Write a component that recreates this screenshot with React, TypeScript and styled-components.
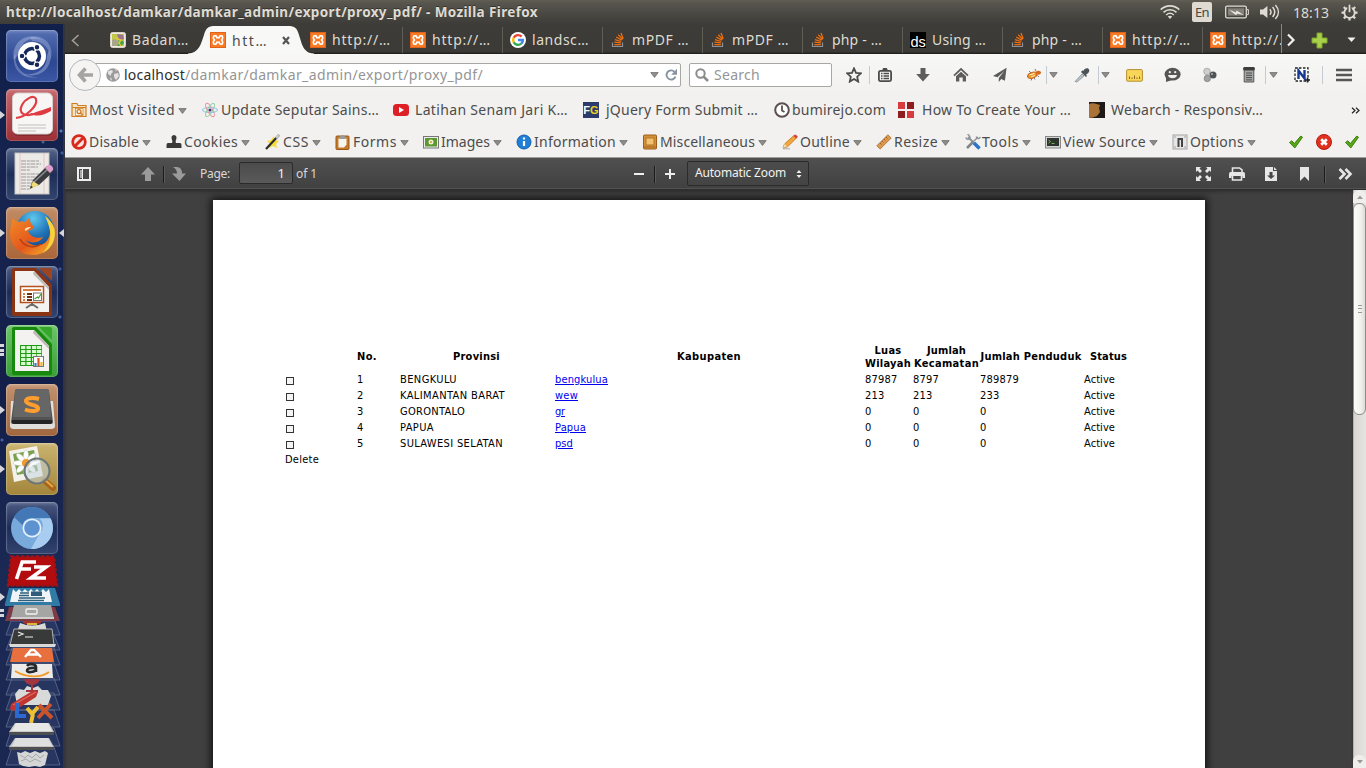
import React, { useLayoutEffect, useRef } from "react";
import styled, { createGlobalStyle } from "styled-components";

const Global = createGlobalStyle`
  * { box-sizing: border-box; }
  html, body { margin: 0; padding: 0; overflow: hidden; background: #404040; }
  svg { display: block; flex: none; }
`;

const Screen = styled.div`
  width: 1366px;
  height: 768px;
  display: flex;
  flex-direction: column;
  overflow: hidden;
  font-family: "Noto Sans", "Open Sans", sans-serif;
  font-size: 14px;
  color: #4c4c4c;
`;

/* ---------- text that fills a known width ---------- */

const FitSpan = styled.span`
  display: block;
  flex: none;
  white-space: nowrap;
`;

function Fit({ w, children }: { w: number; children: string }) {
  const ref = useRef<HTMLSpanElement>(null);
  useLayoutEffect(() => {
    const el = ref.current!;
    el.style.width = "max-content";
    el.style.letterSpacing = "0";
    const natural = el.getBoundingClientRect().width;
    el.style.letterSpacing = `${(w - natural) / children.length}px`;
    el.style.width = `${w}px`;
  }, [w, children]);
  return <FitSpan ref={ref}>{children}</FitSpan>;
}

/* ---------- top panel ---------- */

const TopPanel = styled.header`
  height: 24px;
  flex: none;
  display: flex;
  align-items: center;
  padding-left: 6px;
  background: linear-gradient(#626054 0, #59574f 2px, #4a4943 13px, #3d3c38 24px);
  color: #dfdbd2;
`;
const WindowTitle = styled.div`
  font-weight: 700;
  font-size: 13.5px;
  text-shadow: 0 -1px 0 #33322e;
  flex: 1;
`;
const Indicators = styled.div`
  display: flex;
  align-items: center;
  width: 206px;
  height: 24px;
`;
const Slot = styled.div<{ $w: number }>`
  width: ${(p) => p.$w}px;
  flex: none;
  display: flex;
  align-items: center;
`;
const LangBadge = styled.div`
  width: 20px;
  height: 20px;
  border-radius: 2px;
  background: #dfdbd2;
  color: #4a4943;
  font-size: 13px;
  line-height: 20px;
  display: flex;
  justify-content: center;
`;

const Wifi = () => (
  <svg width="20" height="16" viewBox="0 0 20 16" fill="none" stroke="#dfdbd2" strokeWidth="1.6">
    <path d="M.7 5.6C5.8.6 14.2.6 19.3 5.6" />
    <path d="M3.5 8.4c3.8-3.6 9.2-3.6 13 0" />
    <path d="M6.2 11c2.4-2.2 5.2-2.2 7.6 0" />
    <path d="M7.8 12.6 10 15l2.2-2.4c-1.4-1.1-3-1.1-4.4 0Z" fill="#dfdbd2" stroke="none" />
  </svg>
);
const Battery = () => (
  <svg width="24" height="14" viewBox="0 0 24 14">
    <rect x=".7" y="1.2" width="20.6" height="11.6" rx="1.4" fill="none" stroke="#dfdbd2" strokeWidth="1.3" />
    <rect x="3" y="3.4" width="16" height="7.2" fill="#85827b" />
    <path d="M22 4.6h1.4v5H22" fill="none" stroke="#dfdbd2" />
    <path d="M4 4.8l7 2.6.6-1.8 7 4.4-6.6-1.4-.8 1.6Z" fill="#efebe2" />
  </svg>
);
const Volume = () => (
  <svg width="20" height="16" viewBox="0 0 20 16" fill="none" stroke="#dfdbd2" strokeWidth="1.5">
    <path d="M0 5.4h3L7.4 2v12L3 10.6H0Z" fill="#dfdbd2" stroke="none" />
    <path d="M9.8 5.2c1.4 1.6 1.4 4 0 5.6" />
    <path d="M12.6 3c2.6 3 2.6 7 0 10" />
    <path d="M15.4.9c4 4.4 4 9.8 0 14.2" />
  </svg>
);
const Cog = () => (
  <svg width="17" height="17" viewBox="0 0 17 17" fill="none" stroke="#dfdbd2">
    <circle cx="8.5" cy="8.7" r="5.2" strokeWidth="1.8" />
    <path d="M8.5 13.6v3M3.6 8.7H.5M13.4 8.7h3.1M5 5.2 2.8 3M12 5.2 14.2 3M5 12.2l-2.2 2.2M12 12.2l2.2 2.2" strokeWidth="2.2" />
    <path d="M8.5 0v8" stroke="#4a4943" strokeWidth="4.4" />
    <path d="M8.5.6v7.6" strokeWidth="1.8" />
  </svg>
);

/* ---------- launcher ---------- */

const Body = styled.div`
  flex: 1;
  display: flex;
  min-height: 0;
`;
const Launcher = styled.nav`
  width: 65px;
  flex: none;
  padding: 6px 0 0;
  display: flex;
  flex-direction: column;
  gap: 7px;
  background:
    radial-gradient(circle at 61px 107px, #5379b5 0 1px, transparent 2px),
    radial-gradient(circle at 43px 118px, #416292 0 1px, transparent 2px),
    radial-gradient(circle at 62px 129px, #3d5c94 0 1px, transparent 2px),
    radial-gradient(circle at 60px 245px, #3a558f 0 1px, transparent 2px),
    radial-gradient(circle at 60px 293px, #47649c 0 1px, transparent 2px),
    radial-gradient(circle at 2px 416px, #4a5ba8 0 1px, transparent 2px),
    linear-gradient(90deg, transparent 63px, #33353c 63px),
    linear-gradient(#10204a, #16244f 25%, #131f49 50%, #1b2a55 75%, #1a2750);
`;
const LauncherRow = styled.div`
  display: flex;
  align-items: center;
  height: 52px;
  flex: none;
`;
const Marker = styled.div<{ $kind?: "one" | "many" }>`
  width: 6px;
  height: 14px;
  flex: none;
  clip-path: ${(p) => (p.$kind === "one" ? "polygon(0 3px, 5px 7px, 0 11px)" : "none")};
  background: ${(p) =>
    p.$kind === "one"
      ? "#d6d6da"
      : p.$kind === "many"
        ? "linear-gradient(90deg, transparent 4px, #16244f 4px), linear-gradient(#d6d6da 0 3px, transparent 3px 5px, #d6d6da 5px 8px, transparent 8px 9px, #d6d6da 9px 12px, transparent 12px)"
        : "none"};
`;
const FocusMarker = styled.div`
  width: 5px;
  height: 8px;
  margin-left: 1px;
  background: #d6d6da;
  clip-path: polygon(100% 0, 0 50%, 100% 100%);
`;
const Tile = styled.div<{ $bg: string }>`
  width: 52px;
  height: 52px;
  border-radius: 5px;
  background: ${(p) => p.$bg};
  box-shadow: inset 0 0 0 1px rgba(255, 255, 255, 0.16), inset 0 2px 3px rgba(255, 255, 255, 0.2);
  overflow: hidden;
`;

const Dash = () => (
  <svg width="52" height="52" viewBox="0 0 52 52">
    <path d="M8 30C4 12 22 0 36 10 24 6 14 12 13 24ZM43 20c6 16-8 30-26 24 12 2 24-4 24-18Z" fill="#b9c8ec" opacity=".4" />
    <path d="M24 7c14-4 26 10 20 24 1-12-6-20-18-20ZM10 24c-3 12 8 24 22 23C20 50 6 42 8 26" fill="#b9c8ec" opacity=".35" />
    <circle cx="26" cy="26" r="14" fill="#fff" />
    <circle cx="26" cy="26" r="7.4" fill="none" stroke="#15275c" strokeWidth="3.6" />
    <path d="M26 26 13 26M26 26l6.5-11M26 26l6.5 11" stroke="#fff" strokeWidth="1.5" />
    <circle cx="26" cy="26" r="5.4" fill="#fff" />
    <g fill="#15275c" stroke="#fff" strokeWidth="1.1">
      <circle cx="16" cy="26" r="2.8" />
      <circle cx="31" cy="17.2" r="2.8" />
      <circle cx="31" cy="34.8" r="2.8" />
    </g>
  </svg>
);
const PdfEditor = () => (
  <svg width="52" height="52" viewBox="0 0 52 52">
    <rect x="7" y="5" width="40" height="42" rx="5" fill="#6e1f24" opacity=".6" />
    <rect x="6.500" y="4" width="40" height="41" rx="5" fill="#f7f6f4" stroke="#d4cfcb" />
    <path d="M10 29C20 28 32 17 30 10c-2-5-11 0-14 6-4 8 2 12 12 9 6-2 13-5 17-5" fill="none" stroke="#e04045" strokeWidth="2.200" />
    <path d="M24 24c8 1 15-4 21-6v4c-7 4-15 7-21 2Z" fill="#e0393f" />
    <path d="M12 36h28M12 39h28M12 42h18" stroke="#c2c0bd" />
  </svg>
);
const TextEditor = () => (
  <svg width="52" height="52" viewBox="0 0 52 52">
    <rect x="9" y="5" width="34" height="41" fill="#eceae6" stroke="#c8c6c1" />
    <path d="M14 5v41M38 5v41" stroke="#e9b2b2" strokeWidth=".7" />
    <path d="M15 13h18M15 16h20M15 19h17M15 22h9M15 26h18M15 29h16M15 32h19M15 35h14M15 38h12M15 41h9" stroke="#9a9a9a" strokeWidth="1" strokeDasharray="5 .8 3 .6" />
    <path d="m24 40 3-8 14-14 6 6-14 13Z" fill="#3b3c40" />
    <path d="M28 34 43 20" stroke="#8b8d92" strokeWidth="1.500" />
    <path d="m24 41 3-8 6 4Z" fill="#f0dc74" />
    <path d="m24 41 1-3 2 1Z" fill="#222" />
    <path d="m39 20 3-3c2-1 6 2 5 5l-3 3Z" fill="#e0a0cc" />
  </svg>
);
const FirefoxArt = () => (
  <svg width="52" height="52" viewBox="0 0 52 52">
    <defs>
      <radialGradient id="ffb" cx=".45" cy=".2" r=".9">
        <stop offset="0" stopColor="#5fc8ee" />
        <stop offset=".5" stopColor="#2075b8" />
        <stop offset="1" stopColor="#123a7c" />
      </radialGradient>
      <linearGradient id="ffo" x1="0" y1="0" x2="1" y2="1">
        <stop offset="0" stopColor="#f08c28" />
        <stop offset=".55" stopColor="#e4571c" />
        <stop offset="1" stopColor="#f9b82c" />
      </linearGradient>
    </defs>
    <circle cx="29" cy="23" r="19" fill="url(#ffb)" />
    <path d="M6 12c2 0 4 2 5 3 3-1 6-1 8 0l5-5c0 4 0 7 4 9 0 3-3 4-6 5 2 6 9 8 15 6-3 6-12 7-17 3 6 8 18 7 22-1 4-8 2-13-1-19 6 4 8 9 7 16C46 42 37 48 27 48 13 48 3 37 4 25c0-5 2-8 2-13Z" fill="url(#ffo)" />
    <path d="M39 9c8 6 12 14 9 24-2 6-6 10-11 13 6-8 8-14 7-22-1-6-3-10-5-15Z" fill="#f7d23b" />
    <path d="M19 24c-1-3 2-4 6-4-2 2-4 3-6 4Z" fill="#fbe3b0" />
    <path d="M14 32c4 8 14 10 21 5" fill="none" stroke="#b83c12" strokeWidth="1.500" />
  </svg>
);
const Office = ({ c, d, children }: { c: string; d: string; children: React.ReactNode }) => (
  <svg width="52" height="52" viewBox="0 0 52 52">
    <path d="M8 2h22l16 17v29q0 2-2 2H8q-2 0-2-2V4q0-2 2-2Z" fill={c} />
    <path d="M33 2h11q2 0 2 2v11Z" fill={d} />
    <path d="M9 5h19l15 16v25H9Z" fill="#f3f2f1" />
    <path d="M28 5 43 21v3L27 8Z" fill="#bdbab8" />
    {children}
  </svg>
);
const Impress = () => (
  <Office c="#8a3413" d="#9c4520">
    <rect x="14.500" y="20.500" width="23" height="16" fill="#fff" stroke="#b5511f" strokeWidth="1.500" />
    <path d="M17 24h18" stroke="#d77d40" strokeWidth="2" />
    <path d="M17 28h2M17 31h2M17 34h2" stroke="#d77d40" strokeWidth="2" />
    <path d="M21 28h5M21 31h5M21 34h5" stroke="#6c3015" strokeWidth="2" />
    <rect x="27.500" y="27" width="8" height="7.500" fill="#fff" stroke="#777" />
    <path d="m28.500 33 3-2 1 1 2.500-4" stroke="#4da33a" strokeWidth="1.300" fill="none" />
    <path d="M26 37v2m0-1-6 4m6-4 6 4" stroke="#6b6b6b" strokeWidth="2" />
  </Office>
);
const Calc = () => (
  <Office c="#178a0d" d="#35a82c">
    <rect x="14" y="20" width="22" height="21" fill="#1f9c14" />
    <g fill="#d8fbd2">
      {[21, 25, 29, 33, 37].map((y) => [15, 20.5, 26, 31].map((x) => <rect key={`${x}-${y}`} x={x} y={y} width="4.300" height="3" />))}
    </g>
    <rect x="27.500" y="31.500" width="10" height="10" fill="#fff" stroke="#777" />
    <path d="M29.500 41v-3" stroke="#3a7ac8" strokeWidth="2.200" />
    <path d="M32.500 41v-8" stroke="#d9541e" strokeWidth="2.200" />
    <path d="M35.500 41v-4" stroke="#f0b820" strokeWidth="2.200" />
  </Office>
);
const Sublime = () => (
  <svg width="52" height="52" viewBox="0 0 52 52">
    <path d="M5 17h42l2 25q0 3-4 3H8q-4 0-4-3Z" fill="#e0dedb" />
    <path d="M9 7q0-2 3-2h28q3 0 3 2l4 31q0 2-3 2H8q-3 0-3-2Z" fill="#525252" />
    <path d="M9 7q0-2 3-2h28q3 0 3 2l2 26H7Z" fill="#666" />
    <path d="M6 36h40v2q0 2-3 2H9q-3 0-3-2Z" fill="#242424" />
    <path d="M33 15c-6-2-14-1-13 2.500 1 3.500 11 3 12 6.500s-7 4-13 1.500" fill="none" stroke="#ff9d2e" strokeWidth="4" />
  </svg>
);
const ImageViewer = () => (
  <svg width="52" height="52" viewBox="0 0 52 52">
    <path d="M3 8 31 3l6 30-29 6Z" fill="#f2f1ec" />
    <path d="M7 11 28 7l4 21-21 4Z" fill="#79a04d" />
    <g fill="#fff" stroke="#b8c4b0" strokeWidth=".5">
      {[0, 45, 90, 135, 180, 225, 270, 315].map((a) => (
        <ellipse key={a} cx="20" cy="13" rx="2.600" ry="6" transform={`rotate(${a} 20 20)`} />
      ))}
    </g>
    <circle cx="20" cy="20" r="4" fill="#f19a2a" />
    <path d="m39 38 8 7" stroke="#a8651a" strokeWidth="6" strokeLinecap="round" />
    <path d="m39 37 8 7" stroke="#e8a848" strokeWidth="2" />
    <circle cx="31" cy="28" r="12.500" fill="#c7d6de" fillOpacity=".55" stroke="#6d7678" strokeWidth="2.200" />
    <path d="M22 25c2-6 9-8 13-6-4 1-9 3-13 6Z" fill="#fff" opacity=".8" />
  </svg>
);
const Chromium = () => (
  <svg width="52" height="52" viewBox="0 0 52 52">
    <circle cx="26" cy="26" r="21" fill="#78aadb" />
    <path d="M26 5a21 21 0 0 1 18.300 11H26a10 10 0 0 0-9.500 7L8 15A21 21 0 0 1 26 5Z" fill="#4377b5" />
    <path d="M44.600 16.500A21 21 0 0 1 25 47l9-16a10 10 0 0 0-.5-14.500Z" fill="#a9cdf0" />
    <circle cx="26" cy="26" r="9.500" fill="#e6f1fb" />
    <circle cx="26" cy="26" r="7.800" fill="#5d92d0" />
  </svg>
);
const FoldedStack = () => (
  <svg width="65" height="213" viewBox="0 0 65 213">
    <g fill="#33446f" fillOpacity=".5" stroke="#6b7697" strokeWidth=".7">
      <path d="M11 66h44l5 14H6ZM12 80h42l6 15H6ZM12 93h42l6 17H6ZM12 108h42l6 17H6ZM12 123h42l6 17H6ZM12 138h42l6 17H6ZM12 155h42l6 17H6ZM12 173h42l6 18H6ZM12 192h42l6 18H6Z" />
    </g>
    <path d="M12 2h42l3 26 1 3H7Z" fill="#8d0f10" />
    <path d="M11 1.500h43l3 29H8Z" fill="#b30c0f" stroke="#a01215" strokeWidth="2.400" strokeDasharray="3 2" />
    <path d="m22.500 6-6 18M21 7h15M19 14h12M34 12h12L31 23h15" fill="none" stroke="#fff" strokeWidth="3.600" />
    <path d="M9 33h46l5 16v2H5v-2Z" fill="#2f7ba5" />
    <path d="m13 34 3 3 3-3 3 3 3-3 3 3 3-3 3 3 3-3 3 3 3-3 3 3 3-3 3 13H10Z" fill="#f0f4f6" />
    <path d="M20 38h9M19 40.500h10M19 43h26M18 45.500h26" stroke="#2f5f7c" strokeWidth="1.300" />
    <rect x="31" y="36.500" width="11" height="4.500" fill="#315b7a" />
    <path d="M9 52h46l5 14H5Z" fill="#7d3b48" />
    <path d="M14 50h37l3 13H11Z" fill="#a5a5a4" />
    <rect x="26" y="54" width="11" height="5" rx="1" fill="none" stroke="#f2f2f2" strokeWidth="1.300" />
    <path d="M11 62h43v2H10Z" fill="#cfcecd" />
    <path d="M23 66h18v2q-9 4-18 0Z" fill="#a6362a" />
    <path d="M27 68h10v2H27Z" fill="#e0b43a" />
    <path d="M20 68q12 5 25 0l2 9H17Z" fill="#dbdbd5" />
    <path d="M14 74h38l2 16H10Z" fill="#383a3a" stroke="#cfcfcd" strokeWidth=".8" />
    <path d="m9 89 1 3h45l1-3Z" fill="#d9d9d7" />
    <path d="m18 77 5 2-5 2M25 82h8" stroke="#e9e9e9" strokeWidth="1.200" fill="none" />
    <path d="M13 93h39l2 14H10Z" fill="#e8703f" />
    <path d="m25 102 6-7h3l7 7M27 99.500h11" stroke="#fff" strokeWidth="2.400" fill="none" />
    <path d="M12 109h40l1 14H11Z" fill="#ecebe9" />
    <path d="M27 111c2-3 9-2 9 1v5M36 113c-11-1-11 5-5 4 3 0 4-1 5-2" fill="none" stroke="#25292d" strokeWidth="2.600" />
    <path d="M15 116c11 7 26 7 34 1" fill="none" stroke="#f29a24" strokeWidth="1.800" />
    <path d="m15 139 4-5 5 1 3-4 6 2 5-2 4 4 6 0 3 6-3 9H17Z" fill="#d8d9d9" />
    <path d="M24 124h16q-1 5-7 6v5h5v2H26v-2h5v-5q-6-1-7-6Z" fill="#a23540" />
    <path d="m10 154 1-5 23-14 4 2-2 5-22 14Z" fill="#c03531" />
    <path d="m13 150 23-13" stroke="#de6a5f" strokeWidth="1.200" />
    <path d="M17 148v13h9" fill="none" stroke="#2c69d0" strokeWidth="4" />
    <path d="m27 153 5 6 6-7M33 159l-2 9" fill="none" stroke="#eec132" strokeWidth="4" />
    <path d="m39 150 13 13M51 149l-13 14" stroke="#c9542c" strokeWidth="4" />
    <path d="M15 168h34l5 9v3H9v-3Z" fill="#c9c9c8" />
    <path d="M16 168h32l4 8H12Z" fill="#e7e7e6" />
    <path d="M9 177h45v3H9Z" fill="#4d4e50" />
    <path d="M15 183h34l5 9v3H9v-3Z" fill="#c3c3c3" />
    <path d="M16 183h32l4 8H12Z" fill="#dfdfdf" />
    <path d="M9 192h45v3H9Z" fill="#4d4e50" />
    <path d="m17 197 4 1 4-2 5 2 5-2 5 2 5-2 3 2-3 12-5 2-5-1-6 1-6-1-4-2Z" fill="#d4d6d6" />
    <path d="m20 200 5 3 3-3 4 3 4-4 4 4 4-3M21 206l5-2 4 3 5-3 6 3" fill="none" stroke="#a5a9ac" />
    <path d="m0 38 5 4-5 4ZM0 54h4v3H0ZM0 59h4v3H0Z" fill="#d6d6da" />
  </svg>
);
const StackWrap = styled.div`
  height: 213px;
  flex: none;
  margin-top: -6px;
`;

/* ---------- browser chrome ---------- */

const Browser = styled.main`
  flex: 1;
  min-width: 0;
  display: flex;
  flex-direction: column;
`;
const TabStrip = styled.div`
  height: 30px;
  flex: none;
  display: flex;
  background: linear-gradient(#3d3c38, #3b3a36 28px, #23221f 29px, #23221f);
  color: #dfdbd2;
`;
const ScrollLeft = styled.div`
  width: 37px;
  padding: 10px 0 0 6px;
`;
const Tab = styled.div<{ $line?: boolean; $w?: number }>`
  width: ${(p) => p.$w ?? 100}px;
  height: 29px;
  flex: none;
  display: flex;
  align-items: center;
  padding: 3px 0 0 8px;
  gap: 6px;
  overflow: hidden;
  background: ${(p) =>
    p.$line ? "linear-gradient(90deg, #282723 0 1px, #5f5d54 1px 2px, transparent 2px) -1px 3px no-repeat" : "none"};
  ${FitSpan} { padding-bottom: 1px; }
`;
const ActiveTab = styled.div`
  position: relative;
  width: 100px;
  height: 30px;
  flex: none;
  display: flex;
  align-items: center;
  padding: 2px 0 0 8px;
  gap: 6px;
  color: #4c4c4c;
`;
const TabShape = styled.svg`
  position: absolute;
  left: -14px;
  top: 1px;
`;
const Above = styled.div`
  position: relative;
  display: flex;
  align-items: center;
`;
const TabEnd = styled.div`
  display: flex;
  align-items: center;
  padding-top: 3px;
  height: 29px;
  border-left: 1px solid #8a8880;
`;

const Xampp = () => (
  <svg width="16" height="16" viewBox="0 0 16 16">
    <rect width="16" height="16" rx="1" fill="#fb7a24" />
    <rect x=".5" y=".5" width="15" height="15" fill="none" stroke="#e0621b" />
    <path
      d="M6.700 5.800V4.900Q6.700 3.900 5.700 3.900H4.500Q3.400 3.900 3.400 5V6.500L4.500 8 3.400 9.500V11Q3.400 12.100 4.500 12.100H5.700Q6.700 12.100 6.700 11.100V10.200H9.300V11.100Q9.300 12.100 10.300 12.100H11.500Q12.600 12.100 12.600 11V9.500L11.500 8 12.600 6.500V5Q12.600 3.900 11.500 3.900H10.300Q9.300 3.900 9.300 4.900V5.800Z"
      fill="none"
      stroke="#fff"
      strokeWidth="1.600"
    />
    <path d="M6.500 8h3" stroke="#fb7a24" strokeWidth="1.500" />
  </svg>
);
const MapIcon = () => (
  <svg width="16" height="16" viewBox="0 0 16 16">
    <rect x=".5" y=".5" width="15" height="15" rx="2" fill="#efe9e0" stroke="#d9d3ca" />
    <path d="M2 2h12v12H2Z" fill="#b8c94c" />
    <path d="m7 2 6 1 1 4-4 1-2-3Z" fill="#a0708f" />
    <path d="m2 8 4-1 3 4-3 3H2Z" fill="#a9a58a" />
    <path d="m8 8 5 1 1 2-3 3H7l2-3Z" fill="#3fa34f" />
    <path d="m3 4 4 3 4 1-2 3 2 3" stroke="#e5c33e" strokeWidth="1.400" fill="none" />
  </svg>
);
const GoogleG = () => (
  <svg width="16" height="16" viewBox="0 0 16 16">
    <circle cx="8" cy="8" r="8" fill="#fff" />
    <g fill="none" strokeWidth="2.400">
      <path d="M11.600 4.600A4.900 4.900 0 0 0 3.700 5.800" stroke="#ea4335" />
      <path d="M3.700 5.800a4.900 4.900 0 0 0 0 4.400" stroke="#fbbc05" />
      <path d="M3.700 10.200a4.900 4.900 0 0 0 7.500 1.500" stroke="#34a853" />
      <path d="M11.200 11.700A4.900 4.900 0 0 0 12.900 8H8" stroke="#4285f4" />
    </g>
  </svg>
);
const Stack = () => (
  <svg width="16" height="16" viewBox="0 0 16 16" fill="none">
    <path d="M2.500 10.500v4h10v-4" stroke="#8b9299" strokeWidth="1.200" />
    <path d="M4.300 12.600h6.500M4.400 10.200l6.500.7M5 7.600l6.200 1.900M6.200 5l5.700 3.100M8.300 2.800l4.400 4.600M11 1l2.200 5.800" stroke="#f0700c" strokeWidth="1.300" />
  </svg>
);
const DsBox = styled.div`
  width: 16px;
  height: 16px;
  flex: none;
  background: #000;
  color: #fff;
  font: 14.5px/16px "Liberation Sans", sans-serif;
  padding-top: 2px;
  display: flex;
  justify-content: center;
`;
const Plus = () => (
  <svg width="17" height="17" viewBox="0 0 17 17">
    <path d="M6 1h5v5h5v5h-5v5H6v-5H1V6h5Z" fill="#a8d048" stroke="#7ea52a" />
  </svg>
);

const NavBar = styled.div`
  height: 41px;
  flex: none;
  display: flex;
  align-items: center;
  padding-left: 4px;
  background: linear-gradient(#f7f7f6, #f2f1f0);
`;
const BackButton = styled.div`
  position: relative;
  width: 32px;
  height: 32px;
  flex: none;
  border: 1px solid #b3b8be;
  border-radius: 50%;
  background: #f5f4f3;
  display: flex;
  align-items: center;
  justify-content: center;
`;
const UrlBox = styled.div`
  width: 597px;
  height: 24px;
  flex: none;
  margin-left: -17px;
  padding-left: 21px;
  display: flex;
  align-items: center;
  background: #fff;
  border: 1px solid #a9a7a2;
  border-radius: 2px;
  color: #959595;
`;
const Host = styled.span`
  color: #2d2d2d;
`;
const SearchBox = styled.div`
  width: 143px;
  height: 24px;
  flex: none;
  margin-left: 8px;
  padding-left: 5px;
  display: flex;
  align-items: center;
  gap: 5px;
  background: #fff;
  border: 1px solid #a9a7a2;
  border-radius: 2px;
  color: #959595;
`;
const Caret = ({ c = "#6d6b68" }: { c?: string }) => (
  <svg width="9" height="6" viewBox="0 0 9 6">
    <path d="M.8.6h7.400L4.500 5.400Z" fill={c} fillOpacity=".75" stroke={c} strokeWidth=".8" />
  </svg>
);
const VLine = styled.div`
  width: 1px;
  height: 18px;
  flex: none;
  background: #c3cad2;
`;

const ToolRow = styled.div<{ $h: number; $top: number }>`
  height: ${(p) => p.$h}px;
  padding-top: ${(p) => p.$top}px;
  flex: none;
  display: flex;
  align-items: flex-start;
  padding-left: 6px;
  background: #f2f1f0;
  ${FitSpan} { padding-bottom: 2px; }
`;
const Item = styled.div<{ $w: number; $gap: number }>`
  width: ${(p) => p.$w}px;
  height: 20px;
  flex: none;
  display: flex;
  align-items: center;
  gap: ${(p) => p.$gap}px;
`;
const ArrowBox = styled.div<{ $gap: number }>`
  margin-left: ${(p) => 3 - p.$gap}px;
  padding-top: 1px;
`;

const G = ({ children, w = 16 }: { children: React.ReactNode; w?: number }) => (
  <svg width={w} height="16" viewBox={`0 0 ${w} 16`}>
    {children}
  </svg>
);
const FgBox = styled.div`
  width: 16px;
  height: 16px;
  flex: none;
  background: #2c3b6e;
  color: #fff;
  font: 700 11px/16px "Liberation Sans", sans-serif;
  display: flex;
  justify-content: center;
  b { color: #e8d21d; }
`;

const navIcons: Record<string, React.ReactNode> = {
  star: <G><path d="m8 1.400 2 4.500 4.800.5-3.600 3.300 1 4.900L8 12.100l-4.200 2.500 1-4.900L1.200 6.400 6 5.900Z" fill="none" stroke="#4c4c4c" strokeWidth="1.800" /></G>,
  list: (
    <G>
      <rect x="1.900" y="3.900" width="12.200" height="10.200" rx="1.500" fill="none" stroke="#4c4c4c" strokeWidth="1.800" />
      <path d="M5 3.500 6.200 1h3.600L11 3.500Z" fill="#4c4c4c" />
      <path d="M4 6.500h1.500M6.500 6.500H12M4 9h1.500M6.500 9H12M4 11.500h1.500M6.500 11.500H12" stroke="#4c4c4c" strokeWidth="1.300" />
    </G>
  ),
  down: <G><path d="M5.500 1h5v6h4.300L8 14.500 1.200 7h4.300Z" fill="#5d5d5d" /></G>,
  home: <G><path d="M8 .8 15.600 8l-1.200 1.200L8 3.300 1.600 9.200.4 8Z" fill="#5d5d5d" /><path d="M3 9.200 8 4.700l5 4.500v5.300H9.700v-4H6.300v4H3Z" fill="#5d5d5d" /></G>,
  plane: <G><path d="M14.600.8 1 9l4.500 1.200 7-6.500-5.700 7.200V15l2.400-3 3.700 1.800Z" fill="#5a5a5a" /></G>,
  bug: (
    <G>
      <path d="m3 4 2 2M1.500 9.500h2M9 2l1 2M13 10l-1.500-1.500M5 13.500l1-2M15 5.500l-2-.5M9 12.500l-1-2" stroke="#555" strokeWidth=".8" />
      <ellipse cx="6.300" cy="8.300" rx="5" ry="2.900" transform="rotate(-18 6.300 8.300)" fill="#e99323" stroke="#b9480f" strokeWidth=".7" />
      <ellipse cx="12.300" cy="5.800" rx="2.600" ry="2" fill="#d9641a" />
      <path d="m3.500 8 5-1.700M5 10l4-1.500" stroke="#fde9a8" strokeWidth="1.300" />
    </G>
  ),
  dropper: (
    <G>
      <path d="M1 14.500 8 7l2 2-7 6Z" fill="#b9c3cb" stroke="#7d878e" strokeWidth=".7" />
      <path d="m7 5 5 5 1-1-1-1.200C14 6.500 16 4.500 15 2.500s-4-1.500-5.500 1.200L8.200 3.500Z" fill="#4c5359" />
    </G>
  ),
  ruler: (
    <G w={17}>
      <rect x=".6" y="2.600" width="15.800" height="11.600" rx="1" fill="#f8d65a" stroke="#b68e2e" />
      <path d="M3.500 9.500V12M6 10.500V12M8.500 8.500V12M11 10.500V12M13.500 9.500V12" stroke="#8a661d" />
    </G>
  ),
  smile: (
    <G w={17}>
      <ellipse cx="8.600" cy="7.200" rx="8" ry="6.400" fill="#565656" />
      <path d="m2 10 0 5 6-2Z" fill="#565656" />
      <circle cx="5.800" cy="5.200" r="1.100" fill="#f2f1f0" />
      <circle cx="11.200" cy="5.200" r="1.100" fill="#f2f1f0" />
      <path d="M4 8h9c-.5 4.300-8.500 4.300-9 0Z" fill="#f2f1f0" />
    </G>
  ),
  balls: (
    <G>
      <circle cx="5" cy="4.500" r="3.300" fill="#cfcfcf" stroke="#9a9a9a" strokeWidth=".7" />
      <circle cx="11" cy="8" r="3.500" fill="#4e5355" />
      <circle cx="5.300" cy="11.500" r="3.200" fill="#a0a2a3" stroke="#7b7b7b" strokeWidth=".7" />
      <circle cx="10" cy="7" r="1.100" fill="#aaa" />
    </G>
  ),
  calc: (
    <G>
      <path d="M2.500 1h11l-.7 3V15h-9.600V4Z" fill="#a5a7a6" stroke="#565656" />
      <rect x="2.500" y="0" width="11" height="3.500" rx="1" fill="#3d3d3d" />
      <path d="M5 6h6M5 8.300h6M5 10.600h6M5 12.900h6" stroke="#4c4c4c" strokeWidth="1" />
    </G>
  ),
  nimbus: (
    <G>
      <path d="M1 1h13v13H1Z" fill="#fff" stroke="#222" strokeWidth="1.300" strokeDasharray="2.500 1.500" />
      <path d="M4.500 12V3.500l6 8V3" fill="none" stroke="#17398f" strokeWidth="2.400" />
      <path d="M13.500 10.500v5M11 13h5" stroke="#222" strokeWidth="1.600" />
    </G>
  ),
};

const bookmarks: { icon: React.ReactNode; w: number; gap: number; text: string; tw: number; arrow?: boolean }[] = [
  {
    icon: (
      <G>
        <path d="M1 1.500h5l1 2h8v11H1Z" fill="#f6e3c4" stroke="#d07d20" strokeWidth="1.200" />
        <path d="M1 5.500h14" stroke="#d07d20" />
        <rect x="4.500" y="6.500" width="7.500" height="7" fill="#fbf3e4" stroke="#d58a38" strokeWidth=".8" />
        <circle cx="8" cy="9.600" r="2" fill="none" stroke="#cc7418" strokeWidth="1.200" />
        <path d="m9.500 11 2 2" stroke="#cc7418" strokeWidth="1.200" />
      </G>
    ),
    w: 131, gap: 2, text: "Most Visited", tw: 86, arrow: true,
  },
  {
    icon: (
      <G>
        <g fill="none" strokeWidth=".9">
          <ellipse cx="8" cy="8" rx="7.500" ry="2.600" stroke="#7fbfe6" />
          <ellipse cx="8" cy="8" rx="7.500" ry="2.600" transform="rotate(60 8 8)" stroke="#e98f9c" />
          <ellipse cx="8" cy="8" rx="7.500" ry="2.600" transform="rotate(120 8 8)" stroke="#86cf9a" />
        </g>
        <circle cx="8" cy="8" r="1.600" fill="#46307c" />
      </G>
    ),
    w: 191, gap: 3, text: "Update Seputar Sains…", tw: 158,
  },
  {
    icon: <G><rect y="2" width="16" height="12" rx="3.500" fill="#dd1f26" /><path d="m6 5 5 3-5 3Z" fill="#fff" /></G>,
    w: 190, gap: 6, text: "Latihan Senam Jari K…", tw: 153,
  },
  { icon: <FgBox>F<b>G</b></FgBox>, w: 191, gap: 7, text: "jQuery Form Submit …", tw: 152 },
  {
    icon: <G><circle cx="8" cy="8" r="6.800" fill="#fff" stroke="#5b4f52" strokeWidth="2" /><path d="M8 3.500v5l2.500 1.500" fill="none" stroke="#5b4f52" strokeWidth="1.800" /></G>,
    w: 124, gap: 2, text: "bumirejo.com", tw: 94,
  },
  {
    icon: (
      <G>
        <path d="M0 0h7v7H0ZM9 9h7v7H9Z" fill="#d93a40" />
        <path d="M9 0h7v7H9ZM0 9h7v7H0Z" fill="#8f1d20" />
      </G>
    ),
    w: 191, gap: 8, text: "How To Create Your …", tw: 149,
  },
  {
    icon: <G><rect width="16" height="16" fill="#1f1a18" /><path d="M0 2c4-2 8 0 11 1l-1 3 1 4-3 4c-3 1-5 2-8 2Z" fill="#a97338" /></G>,
    w: 262, gap: 6, text: "Webarch - Responsiv…", tw: 152,
  },
];

const tools: { icon: React.ReactNode; w: number; text: string; tw: number; gap: number }[] = [
  { icon: <G><circle cx="8" cy="8" r="7.700" fill="#d8291c" /><circle cx="8" cy="8" r="4.900" fill="#f6e5e2" /><path d="M3.800 12.200 12.200 3.800" stroke="#d8291c" strokeWidth="3" /></G>, w: 95, text: "Disable", tw: 50, gap: 2 },
  { icon: <G><path d="M5.500 3.500C5.500 0 10.500 0 10.500 3.500c0 2.500-1.500 3-.5 5.500h4q1.500 0 1.500 2v3H.5v-3q0-2 1.500-2h4c1-2.500-.5-3-.5-5.500Z" fill="#3a3a3a" /></G>, w: 99, text: "Cookies", tw: 54, gap: 2 },
  {
    icon: (
      <G>
        <path d="m9 2 1 4 4 1-3 3 1 4-4-2-4 2 1-4-3-3 4-1Z" fill="#f7dd3c" />
        <path d="m1 15 13-14" stroke="#2b2b2b" strokeWidth="2.200" />
        <path d="m11 4 3-3" stroke="#d0d0d0" strokeWidth="2.200" />
      </G>
    ), w: 70, text: "CSS", tw: 26, gap: 2,
  },
  {
    icon: (
      <G>
        <rect x="1" y="2" width="13" height="13.500" rx="1" fill="#c67a2b" stroke="#9a5614" />
        <path d="M3.500 4.500h8v6l-2.500 3H3.500Z" fill="#f7f5f0" />
        <path d="M4.500 5V2.500L6 2q1-2 3 0l1.500.5V5Z" fill="#9a9a9a" />
      </G>
    ), w: 88, text: "Forms", tw: 44, gap: 2,
  },
  {
    icon: (
      <G>
        <rect x=".5" y="2.500" width="15" height="11.500" fill="#ededed" stroke="#777" />
        <rect x="2" y="4" width="12" height="8.500" fill="#5c982e" />
        <circle cx="8" cy="8" r="2.500" fill="#f3efda" />
        <circle cx="8" cy="8" r="1" fill="#caa21d" />
      </G>
    ), w: 93, text: "Images", tw: 49, gap: 2,
  },
  { icon: <G><circle cx="8" cy="8" r="7" fill="#1f7fd6" stroke="#155fae" /><path d="M8 7v5M8 3.500v2" stroke="#fff" strokeWidth="2.200" /></G>, w: 126, text: "Information", tw: 82, gap: 2 },
  {
    icon: (
      <G>
        <rect x="1.500" y="1" width="13" height="14" rx="1" fill="#d58f38" stroke="#9c601b" />
        <rect x="4" y="4" width="8" height="7" fill="#f2c273" stroke="#b37526" />
        <path d="M2 13h12" stroke="#a3661e" />
      </G>
    ), w: 140, text: "Miscellaneous", tw: 95, gap: 2,
  },
  {
    icon: (
      <G>
        <path d="M1 14.800h7" stroke="#aaa" />
        <path d="m1 14 1.500-4 10-9 2.500 2.500-9.500 9.300Z" fill="#f3a63a" stroke="#bb6d16" strokeWidth=".8" />
        <path d="m11.500 2 2-1.600 2.300 2.200-1.800 2Z" fill="#d83c46" />
        <path d="m1 14 1.500-4 2.500 2.500Z" fill="#f0dcb8" />
      </G>
    ), w: 94, text: "Outline", tw: 50, gap: 2,
  },
  { icon: <G><path d="m.8 11.800 11-11L15.200 4l-11 11Z" fill="#dc9a50" stroke="#a9682a" strokeWidth=".8" /><path d="m4 9 1.500 1.500M6 7l1.500 1.500M8 5l1.500 1.500M10 3l1.500 1.500" stroke="#8b5320" strokeWidth=".8" /></G>, w: 89, text: "Resize", tw: 44, gap: 2 },
  {
    icon: (
      <G>
        <path d="m3 3 10 10" stroke="#8d9296" strokeWidth="2" />
        <path d="M13 3 8 8" stroke="#8d9296" strokeWidth="1.500" />
        <path d="m8 8-6 6" stroke="#7f8488" strokeWidth="2.500" />
        <path d="m9 9 5.500 5.500" stroke="#2c74c9" strokeWidth="3.500" />
        <path d="M.8 3.500C1.500 6 5 5.500 5 3.500S3 .3 2.500 1M15.300 3c-1 2.500-4 2-4-.5" fill="none" stroke="#8d9296" strokeWidth="1.400" />
      </G>
    ), w: 80, text: "Tools", tw: 37, gap: 1,
  },
  {
    icon: (
      <G>
        <rect x=".5" y="2.500" width="15" height="11.500" fill="#d5d5d5" stroke="#888" />
        <rect x="2" y="4" width="12" height="8" fill="#2d352e" />
        <path d="m3.500 6 2 1.500-2 1.500M6.500 9.500h3" fill="none" stroke="#7fbf5a" strokeWidth=".9" />
      </G>
    ), w: 127, text: "View Source", tw: 83, gap: 2,
  },
  {
    icon: (
      <G>
        <rect x="1" y="1" width="14" height="14" fill="#e6e6e6" stroke="#a4a4a4" />
        <path d="M5.500 13V4h5.500v9H9V6H7.500v7Z" fill="#444" />
        <path d="M2.500 3h1M12.500 3h1M2.500 13h1M12.500 13h1" stroke="#666" />
      </G>
    ), w: 116, text: "Options", tw: 54, gap: 2,
  },
];

const Check = () => (
  <svg width="16" height="16" viewBox="0 0 16 16">
    <path d="m1.500 8.500 2.300-1.800L6.300 9.500 12.800 2l1.700 1.200L6.800 14Z" fill="#56a712" stroke="#357a08" strokeWidth=".9" />
  </svg>
);
const ErrorDot = () => (
  <svg width="16" height="16" viewBox="0 0 16 16">
    <circle cx="8" cy="8" r="7.500" fill="#e0301e" stroke="#b81c10" />
    <path d="m5.200 5.200 5.600 5.600M10.800 5.200l-5.600 5.600" stroke="#fff" strokeWidth="2.700" />
  </svg>
);

/* ---------- PDF viewer ---------- */

const PdfBar = styled.div`
  height: 33px;
  flex: none;
  display: flex;
  align-items: center;
  padding-left: 12px;
  border-top: 1px solid #a09f9d;
  box-shadow: inset 0 -1px 0 #2e2e2e, inset 0 -2px 0 #525252;
  background: linear-gradient(#505050, #404040);
  color: #d9d9d9;
  font-size: 12px;
  ${FitSpan} { padding-bottom: 2px; }
`;
const PdfSep = styled.div`
  width: 2px;
  height: 17px;
  flex: none;
  background: linear-gradient(90deg, #1c1c1c 0 1px, #5a5a5a 1px);
`;
const PageInput = styled.div`
  width: 54px;
  height: 22px;
  margin: 0 3px 2px 0;
  padding-right: 7px;
  flex: none;
  display: flex;
  align-items: center;
  justify-content: flex-end;
  border: 1px solid #2b2b2b;
  border-radius: 2px;
  background: linear-gradient(#4b4b4b, #5a5a5a);
  color: #f2f2f2;
  font-size: 13px;
`;
const ZoomSelect = styled.div`
  width: 122px;
  height: 25px;
  margin: 0 0 1px -1px;
  padding-left: 7px;
  flex: none;
  display: flex;
  align-items: center;
  border: 1px solid #2b2b2b;
  border-radius: 2px;
  background: linear-gradient(#4c4c4c, #444);
  color: #f2f2f2;
`;
const Viewer = styled.div`
  flex: 1;
  display: flex;
  min-height: 0;
  background: #404040;
`;
const PageArea = styled.div`
  flex: 1;
  padding: 10px 0 0 148px;
  overflow: hidden;
  box-shadow: inset 0 2px 3px rgba(0, 0, 0, 0.25);
`;
const Paper = styled.section`
  width: 992px;
  height: 700px;
  background: #fff;
  box-shadow: 0 0 8px 2px rgba(0, 0, 0, 0.75);
  padding: 143px 0 0 72px;
  color: #000;
  font-family: "DejaVu Sans Condensed", "DejaVu Sans", sans-serif;
  font-stretch: condensed;
  font-size: 11px;
`;
const TRow = styled.div<{ $head?: boolean }>`
  display: grid;
  grid-template-columns: 72px 43px 155px 310px 48px 67px 104px 49px;
  height: ${(p) => (p.$head ? 28 : 16)}px;
  align-items: center;
  line-height: ${(p) => (p.$head ? "13px" : "16px")};
  font-weight: ${(p) => (p.$head ? 700 : 400)};
`;
const HCell = styled.div<{ $left?: boolean; $shift?: number; $two?: boolean }>`
  display: flex;
  flex-direction: column;
  align-items: ${(p) => (p.$left ? "flex-start" : "center")};
  margin-right: ${(p) => p.$shift ?? 0}px;
  padding-bottom: ${(p) => (p.$two ? 0 : 2)}px;
`;
const Rows = styled.div`
  padding-top: 1px;
`;
const Link = styled.span`
  color: #0000ee;
  text-decoration: underline;
  display: flex;
`;
const Square = styled.span`
  display: block;
  width: 8px;
  height: 8px;
  margin: 1px 0 0 1px;
  border: 1px solid #333;
  background: #f4f4f4;
`;
const ScrollTrack = styled.div`
  width: 13px;
  flex: none;
  display: flex;
  flex-direction: column;
  background: linear-gradient(90deg, #b4b2ae 0 1px, #d9d7d3 1px, #e6e4e1);
`;
const ScrollButton = styled.div`
  height: 13px;
  flex: none;
  display: flex;
  justify-content: center;
  padding-top: 5px;
  border-radius: 6px 6px 0 0;
  background: #efeeec;
`;
const Thumb = styled.div`
  height: 212px;
  flex: none;
  display: flex;
  align-items: center;
  justify-content: center;
  border: 1px solid #8f8d89;
  border-radius: 6px;
  background: linear-gradient(90deg, #fbfbfa, #f2f1ef 60%, #dddbd8);
`;
const Grip = styled.div`
  width: 4px;
  height: 8px;
  border-top: 1px solid #999;
  border-bottom: 1px solid #999;
  background: linear-gradient(transparent 2px, #999 2px 3px, transparent 3px);
`;
const TrackRest = styled.div`
  flex: 1;
`;

const rows: [string, string, string, number, string, string, string][] = [
  ["1", "BENGKULU", "bengkulua", 53, "87987", "8797", "789879"],
  ["2", "KALIMANTAN BARAT", "wew", 23, "213", "213", "233"],
  ["3", "GORONTALO", "gr", 10, "0", "0", "0"],
  ["4", "PAPUA", "Papua", 31, "0", "0", "0"],
  ["5", "SULAWESI SELATAN", "psd", 18, "0", "0", "0"],
];
const provinceWidth = [57, 105, 65, 34, 103];

const tabs: { icon: React.ReactNode; text: string; tw: number; line?: boolean; w?: number }[] = [
  { icon: <Xampp />, text: "http://…", tw: 59 },
  { icon: <Xampp />, text: "http://…", tw: 59, line: true },
  { icon: <GoogleG />, text: "landsc…", tw: 57, line: true },
  { icon: <Stack />, text: "mPDF …", tw: 57, line: true },
  { icon: <Stack />, text: "mPDF …", tw: 57, line: true },
  { icon: <Stack />, text: "php - …", tw: 50, line: true },
  { icon: <DsBox><Fit w={15}>ds</Fit></DsBox>, text: "Using …", tw: 54, line: true },
  { icon: <Stack />, text: "php - …", tw: 50, line: true },
  { icon: <Xampp />, text: "http://…", tw: 59, line: true },
  { icon: <Xampp />, text: "http://…", tw: 59, line: true, w: 79 },
];

export default function App() {
  return (
    <Screen>
      <Global />
      <TopPanel>
        <WindowTitle>
          <Fit w={532}>http://localhost/damkar/damkar_admin/export/proxy_pdf/ - Mozilla Firefox</Fit>
        </WindowTitle>
        <Indicators>
          <Slot $w={32}><Wifi /></Slot>
          <Slot $w={33}><LangBadge><Fit w={14}>En</Fit></LangBadge></Slot>
          <Slot $w={35}><Battery /></Slot>
          <Slot $w={33}><Volume /></Slot>
          <Slot $w={48}><Fit w={36}>18:13</Fit></Slot>
          <Cog />
        </Indicators>
      </TopPanel>

      <Body>
        <Launcher>
          <LauncherRow><Marker /><Tile $bg="linear-gradient(#5670b3, #2d4792 60%, #3c57a4)"><Dash /></Tile></LauncherRow>
          <LauncherRow><Marker $kind="one" /><Tile $bg="linear-gradient(#c4676c, #9c3036)"><PdfEditor /></Tile></LauncherRow>
          <LauncherRow><Marker /><Tile $bg="linear-gradient(#56648a, #1c2d58 50%, #33446f)"><TextEditor /></Tile></LauncherRow>
          <LauncherRow><Marker $kind="one" /><Tile $bg="linear-gradient(#c28c66, #a96639)"><FirefoxArt /></Tile><FocusMarker /></LauncherRow>
          <LauncherRow><Marker /><Tile $bg="linear-gradient(#4d5b83, #1c2c58 50%, #33446f)"><Impress /></Tile></LauncherRow>
          <LauncherRow><Marker $kind="many" /><Tile $bg="linear-gradient(#6cc468, #3a9f37)"><Calc /></Tile></LauncherRow>
          <LauncherRow><Marker $kind="one" /><Tile $bg="linear-gradient(#c3926f, #a0673f)"><Sublime /></Tile></LauncherRow>
          <LauncherRow><Marker $kind="one" /><Tile $bg="linear-gradient(#c9b36f, #a3863a)"><ImageViewer /></Tile></LauncherRow>
          <LauncherRow><Marker /><Tile $bg="linear-gradient(#4d5b83, #1c2c58 50%, #33446f)"><Chromium /></Tile></LauncherRow>
          <StackWrap><FoldedStack /></StackWrap>
        </Launcher>

        <Browser>
          <TabStrip>
            <ScrollLeft>
              <svg width="9" height="13" viewBox="0 0 9 13"><path d="M7.500 1 1.500 6.500l6 5.500" fill="none" stroke="#a5a29a" strokeWidth="1.500" /></svg>
            </ScrollLeft>
            <Tab><MapIcon /><Fit w={57}>Badan…</Fit></Tab>
            <ActiveTab>
              <TabShape width="126" height="29" viewBox="0 0 126 29">
                <path d="M0 28.500C11 28 13 19 16 10 18 3 20 1 27 1h73c7 0 9 2 11 9 3 9 4 18 15 18.500V29H0Z" fill="#f8f8f7" />
              </TabShape>
              <Above><Xampp /></Above>
              <Above><Fit w={36}>htt…</Fit></Above>
              <Above>
                <svg width="24" height="9" viewBox="0 0 24 9"><path d="m9 1 6 7M15 1 9 8" stroke="#555" strokeWidth="2.200" fill="none" /></svg>
              </Above>
            </ActiveTab>
            {tabs.map((t, i) => (
              <Tab key={i} $line={t.line} $w={t.w}>{t.icon}<Fit w={t.tw}>{t.text}</Fit></Tab>
            ))}
            <TabEnd>
              <Slot $w={29}><svg width="18" height="14" viewBox="0 0 18 14"><path d="m6 1.500 5.500 5.500L6 12.500" fill="none" stroke="#f2f1f0" strokeWidth="2.200" /></svg></Slot>
              <Slot $w={36}><Plus /></Slot>
              <svg width="9" height="6" viewBox="0 0 9 6"><path d="M.5.500h8L4.500 5Z" fill="#f2f1f0" /></svg>
            </TabEnd>
          </TabStrip>

          <NavBar>
            <BackButton>
              <svg width="17" height="16" viewBox="0 0 17 16"><path d="M8.500 1.500 2.500 8l6 6.500M3 8h13" fill="none" stroke="#a5a4a2" strokeWidth="3.600" /></svg>
            </BackButton>
            {/* the round button overlaps the start of the address field */}
            <UrlBox>
              <Slot $w={18}>
                <svg width="14" height="14" viewBox="0 0 14 14"><circle cx="7" cy="7" r="6.800" fill="#9a9a9a" /><path d="m2 3 4-1 1 2-2 2v2L2 6ZM8 6l4-1 1 3-3 4-2-3ZM9 1l2 1-1 1.500ZM4 9l2 2-1 2Z" fill="#e3e3e3" /></svg>
              </Slot>
              <Host><Fit w={61}>localhost</Fit></Host>
              <Slot $w={465}><Fit w={298}>/damkar/damkar_admin/export/proxy_pdf/</Fit></Slot>
              <Slot $w={15}><Caret /></Slot>
              <svg width="13" height="14" viewBox="0 0 13 14"><path d="M10.500 8.500A4.600 4.600 0 1 1 9.500 3.800" fill="none" stroke="#8793a0" strokeWidth="1.900" /><path d="M12 .8v6H6.200Z" fill="#8793a0" /></svg>
            </UrlBox>
            <SearchBox>
              <svg width="14" height="14" viewBox="0 0 14 14" fill="none" stroke="#8c8c8c" strokeWidth="2"><circle cx="5.500" cy="5.500" r="4.200" /><path d="m8.500 8.500 4.500 4.500" strokeWidth="2.500" /></svg>
              <Fit w={46}>Search</Fit>
            </SearchBox>
            <Slot $w={14} />
            <Slot $w={23}>{navIcons.star}</Slot>
            <Slot $w={8}><VLine /></Slot>
            <Slot $w={38}>{navIcons.list}</Slot>
            <Slot $w={38}>{navIcons.down}</Slot>
            <Slot $w={39}>{navIcons.home}</Slot>
            <Slot $w={34}>{navIcons.plane}</Slot>
            <Slot $w={20}>{navIcons.bug}</Slot>
            <Slot $w={3}><VLine /></Slot>
            <Slot $w={25}><Caret /></Slot>
            <Slot $w={24}>{navIcons.dropper}</Slot>
            <Slot $w={3}><VLine /></Slot>
            <Slot $w={25}><Caret /></Slot>
            <Slot $w={38}>{navIcons.ruler}</Slot>
            <Slot $w={38}>{navIcons.smile}</Slot>
            <Slot $w={39}>{navIcons.balls}</Slot>
            <Slot $w={24}>{navIcons.calc}</Slot>
            <Slot $w={4}><VLine /></Slot>
            <Slot $w={25}><Caret /></Slot>
            <Slot $w={28}>{navIcons.nimbus}</Slot>
            <Slot $w={14}><VLine /></Slot>
            <svg width="16" height="14" viewBox="0 0 16 14"><path d="M0 2h16M0 7h16M0 12h16" stroke="#565656" strokeWidth="2.600" /></svg>
          </NavBar>

          <ToolRow $h={31} $top={5}>
            {bookmarks.map((b) => (
              <Item key={b.text} $w={b.w} $gap={b.gap}>
                {b.icon}<Fit w={b.tw}>{b.text}</Fit>
                {b.arrow && <ArrowBox $gap={b.gap}><Caret /></ArrowBox>}
              </Item>
            ))}
            <Item $w={10} $gap={0}>
              <svg width="9" height="7" viewBox="0 0 9 7"><path d="m1 .8 3 2.700-3 2.700M5 .8l3 2.700-3 2.700" fill="none" stroke="#222" strokeWidth="1.200" /></svg>
            </Item>
          </ToolRow>
          <ToolRow $h={31} $top={6}>
            {tools.map((t) => (
              <Item key={t.text} $w={t.w} $gap={t.gap}>
                {t.icon}<Fit w={t.tw}>{t.text}</Fit>
                <ArrowBox $gap={t.gap}><Caret /></ArrowBox>
              </Item>
            ))}
            <Item $w={28} $gap={0}><Check /></Item>
            <Item $w={28} $gap={0}><ErrorDot /></Item>
            <Item $w={16} $gap={0}><Check /></Item>
          </ToolRow>

          <PdfBar>
            <Slot $w={64}>
              <svg width="14" height="14" viewBox="0 0 14 14"><rect x="1" y="1" width="12" height="12" fill="none" stroke="#eee" strokeWidth="2" /><path d="M3 3h2v8H3Z" fill="#aaa" /><path d="M5.500 2v10" stroke="#eee" /></svg>
            </Slot>
            <Slot $w={22}><svg width="14" height="14" viewBox="0 0 14 14"><path d="m7 0 7 7.500H10V14H4V7.500H0Z" fill="#9b9b9b" /></svg></Slot>
            <Slot $w={9}><PdfSep /></Slot>
            <Slot $w={28}><svg width="14" height="14" viewBox="0 0 14 14"><path d="M1 0h4q5 0 5 6.500h4L7.500 14 0 6.500h5Q5 2 1 0Z" fill="#9b9b9b" /></svg></Slot>
            <Slot $w={39}><Fit w={30}>Page:</Fit></Slot>
            <PageInput>1</PageInput>
            <Slot $w={338}><Fit w={21}>of 1</Fit></Slot>
            <Slot $w={20}><svg width="10" height="10" viewBox="0 0 10 10"><path d="M0 5h10" stroke="#eee" strokeWidth="2" /></svg></Slot>
            <Slot $w={11}><PdfSep /></Slot>
            <Slot $w={23}><svg width="10" height="10" viewBox="0 0 10 10"><path d="M0 5h10M5 0v10" stroke="#eee" strokeWidth="2" /></svg></Slot>
            <ZoomSelect>
              <Slot $w={101}><Fit w={91}>Automatic Zoom</Fit></Slot>
              <svg width="6" height="8" viewBox="0 0 6 8"><path d="M3 0l2.500 3h-5ZM3 8l2.500-3h-5Z" fill="#eee" /></svg>
            </ZoomSelect>
            <Slot $w={387} />
            <Slot $w={33}>
              <svg width="15" height="14" viewBox="0 0 15 14" fill="#e6e6e6"><path d="M0 0h5L3.500 1.500 6 4 4 6 1.500 3.500 0 5ZM15 0v5l-1.500-1.500L11 6 9 4l2.500-2.500L10 0ZM0 14V9l1.500 1.500L4 8l2 2-2.500 2.500L5 14ZM15 14h-5l1.500-1.500L9 10l2-2 2.500 2.500L15 9Z" /></svg>
            </Slot>
            <Slot $w={36}>
              <svg width="16" height="14" viewBox="0 0 16 14"><path d="M3.500 5V1h7L13 3v2" fill="none" stroke="#e6e6e6" strokeWidth="1.600" /><path d="M1.500 5h13q1.500 0 1.500 2v4h-2.500V9h-11v2H0V7q0-2 1.500-2Z" fill="#e6e6e6" /><path d="M3.500 9v4h9V9" fill="none" stroke="#e6e6e6" strokeWidth="1.600" /></svg>
            </Slot>
            <Slot $w={35}>
              <svg width="12" height="14" viewBox="0 0 12 14"><path d="M0 0h8v4h4v10H0ZM9 0l3 3H9Z" fill="#e6e6e6" /><path d="M4.500 5h3v3.500H10L6 12 2 8.500h2.500Z" fill="#484848" /></svg>
            </Slot>
            <Slot $w={24}><svg width="9" height="14" viewBox="0 0 9 14"><path d="M0 0h9v14L4.500 9.500 0 14Z" fill="#e6e6e6" /></svg></Slot>
            <Slot $w={14}><PdfSep /></Slot>
            <svg width="15" height="12" viewBox="0 0 15 12"><path d="m1.500 1 5 5-5 5M7.500 1l5 5-5 5" fill="none" stroke="#e6e6e6" strokeWidth="2.600" /></svg>
          </PdfBar>

          <Viewer>
            <PageArea>
              <Paper>
                <TRow $head>
                  <span />
                  <HCell $left><Fit w={20}>No.</Fit></HCell>
                  <HCell $shift={2}><Fit w={47}>Provinsi</Fit></HCell>
                  <HCell $shift={2}><Fit w={64}>Kabupaten</Fit></HCell>
                  <HCell $two $shift={2}><Fit w={27}>Luas</Fit><Fit w={46}>Wilayah</Fit></HCell>
                  <HCell $two><Fit w={39}>Jumlah</Fit><Fit w={65}>Kecamatan</Fit></HCell>
                  <HCell $shift={2}><Fit w={101}>Jumlah Penduduk</Fit></HCell>
                  <HCell><Fit w={37}>Status</Fit></HCell>
                </TRow>
                <Rows>
                  {rows.map((r, i) => (
                    <TRow key={r[0]}>
                      <Square />
                      <span>{r[0]}</span>
                      <Fit w={provinceWidth[i]}>{r[1]}</Fit>
                      <Link><Fit w={r[3]}>{r[2]}</Fit></Link>
                      <Fit w={r[4].length * 6.5}>{r[4]}</Fit>
                      <Fit w={r[5].length * 6.5}>{r[5]}</Fit>
                      <Fit w={r[6].length * 6.5}>{r[6]}</Fit>
                      <Fit w={31}>Active</Fit>
                    </TRow>
                  ))}
                  <TRow><Fit w={34}>Delete</Fit></TRow>
                </Rows>
              </Paper>
            </PageArea>
            <ScrollTrack>
              <ScrollButton><svg width="6" height="4" viewBox="0 0 6 4"><path d="M0 4 3 .5 6 4Z" fill="#999" /></svg></ScrollButton>
              <Thumb><Grip /></Thumb>
              <TrackRest />
              <ScrollButton><svg width="6" height="4" viewBox="0 0 6 4"><path d="M0 0 3 3.500 6 0Z" fill="#999" /></svg></ScrollButton>
            </ScrollTrack>
          </Viewer>
        </Browser>
      </Body>
    </Screen>
  );
}
